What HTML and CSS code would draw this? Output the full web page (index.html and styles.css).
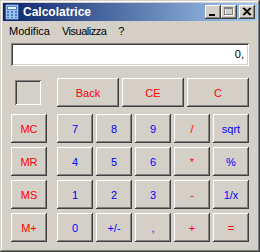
FILE: index.html
```
<!DOCTYPE html>
<html lang="it">
<head>
    <meta charset="UTF-8">
    <title>Calcolatrice</title>
    <link rel="stylesheet" href="styles.css">
</head>
<body>
    <div class="window">
        <div class="titlebar">
            <svg class="app-icon" width="16" height="16" viewBox="0 0 16 16">
                <rect x="1.5" y="0.5" width="13" height="15" rx="1" fill="#9cc3ee" stroke="#3a5f9e"/>
                <rect x="3.5" y="2.5" width="9" height="3" fill="#e8f4ff" stroke="#5a7fb8"/>
                <g fill="#4f7bc0">
                    <rect x="3" y="7" width="2" height="2"/><rect x="7" y="7" width="2" height="2"/><rect x="11" y="7" width="2" height="2"/>
                    <rect x="3" y="10" width="2" height="2"/><rect x="7" y="10" width="2" height="2"/><rect x="11" y="10" width="2" height="2"/>
                    <rect x="3" y="13" width="2" height="1"/><rect x="7" y="13" width="2" height="1"/><rect x="11" y="13" width="2" height="1"/>
                </g>
            </svg>
            <span class="title">Calcolatrice</span>
            <div class="caption-btns">
                <span class="cap-btn"><svg width="16" height="14" viewBox="0 0 16 14"><rect x="4" y="9" width="6" height="2" fill="#000"/></svg></span>
                <span class="cap-btn"><svg width="16" height="14" viewBox="0 0 16 14"><rect x="4.5" y="3.5" width="8" height="7" fill="none" stroke="#fff"/><rect x="3.5" y="2.5" width="8" height="7" fill="none" stroke="#808080"/><rect x="3" y="2" width="9" height="2" fill="#808080"/></svg></span>
                <span class="cap-btn close"><svg width="16" height="14" viewBox="0 0 16 14"><path d="M4 3 L11 10 M5 3 L12 10 M11 3 L4 10 M12 3 L5 10" stroke="#000" stroke-width="1.2"/></svg></span>
            </div>
        </div>
        <div class="menubar">
            <span class="menu-item">Modifica</span>
            <span class="menu-item tight">Visualizza</span>
            <span class="menu-item">?</span>
        </div>
        <div class="content">
            <div class="display">0,</div>
            <div class="keys">
                <div class="mem-cell"><div class="mem-ind"></div></div>
                <div class="edit-row">
                    <button class="key red">Back</button>
                    <button class="key red">CE</button>
                    <button class="key red">C</button>
                </div>

                <button class="key red">MC</button>
                <button class="key blue">7</button>
                <button class="key blue">8</button>
                <button class="key blue">9</button>
                <button class="key red">/</button>
                <button class="key blue">sqrt</button>

                <button class="key red">MR</button>
                <button class="key blue">4</button>
                <button class="key blue">5</button>
                <button class="key blue">6</button>
                <button class="key red">*</button>
                <button class="key blue">%</button>

                <button class="key red">MS</button>
                <button class="key blue">1</button>
                <button class="key blue">2</button>
                <button class="key blue">3</button>
                <button class="key red">-</button>
                <button class="key blue">1/x</button>

                <button class="key red">M+</button>
                <button class="key blue">0</button>
                <button class="key blue">+/-</button>
                <button class="key blue">,</button>
                <button class="key red">+</button>
                <button class="key red">=</button>
            </div>
        </div>
    </div>
</body>
</html>
```
FILE: styles.css
```
body {
    margin: 0;
    font-family: "Liberation Sans", Arial, sans-serif;
    font-size: 11px;
}
.window {
    width: 260px;
    height: 252px;
    box-sizing: border-box;
    padding: 3px;
    background: #d4d0c8;
    box-shadow: inset -1px -1px #404040, inset 1px 1px #d4d0c8,
                inset -2px -2px #808080, inset 2px 2px #fff;
}

/* barra del titolo */
.titlebar {
    height: 18px;
    display: flex;
    align-items: center;
    padding: 0 2px 0 1px;
    background: linear-gradient(to right, #0a246a, #a6caf0);
}
.app-icon {
    margin-right: 3px;
}
.title {
    color: #fff;
    font-weight: bold;
    font-size: 12px;
    flex: 1;
}
.caption-btns {
    display: flex;
}
.cap-btn {
    width: 16px;
    height: 14px;
    display: block;
    background: #d4d0c8;
    box-shadow: inset -1px -1px #404040, inset 1px 1px #fff, inset -2px -2px #808080;
}
.cap-btn svg {
    display: block;
}
.cap-btn.close {
    margin-left: 2px;
}

/* menu */
.menubar {
    height: 19px;
    display: flex;
    align-items: center;
}
.menu-item {
    padding: 0 6px;
}
.menu-item.tight {
    letter-spacing: -0.5px; /* Tahoma e' piu' stretto */
}

.content {
    padding: 3px 8px 0 8px;
}
.display {
    height: 23px;
    line-height: 23px;
    background: #fff;
    text-align: right;
    padding-right: 5px;
    box-shadow: inset 1px 1px #808080, inset -1px -1px #fff,
                inset 2px 2px #404040, inset -2px -2px #d4d0c8;
}

.keys {
    margin-top: 12px;
    display: grid;
    grid-template-columns: 43px repeat(5, 36px);
    grid-template-rows: 32px repeat(4, 29px);
    column-gap: 3px;
    row-gap: 4px;
}
.mem-cell {
    align-self: start;
}
.mem-ind {
    width: 26px;
    height: 25px;
    margin: 2px 0 0 4px;
    box-shadow: inset 1px 1px #808080, inset -1px -1px #fff,
                inset 2px 2px #404040, inset -2px -2px #d4d0c8;
}
.edit-row {
    grid-column: 2 / -1;
    height: 29px;
    display: grid;
    grid-template-columns: repeat(3, 1fr);
    column-gap: 3px;
}
.key {
    width: 36px;
    height: 29px;
    padding: 0;
    border: none;
    font-family: "Liberation Sans", Arial, sans-serif;
    font-size: 11px;
    background: #d4d0c8;
    box-shadow: inset -1px -1px #404040, inset 1px 1px #fff,
                inset -2px -2px #808080, inset 2px 2px #d4d0c8;
}
.edit-row .key {
    width: auto;
}
.red {
    color: #f00;
}
.blue {
    color: #00f;
}
```
